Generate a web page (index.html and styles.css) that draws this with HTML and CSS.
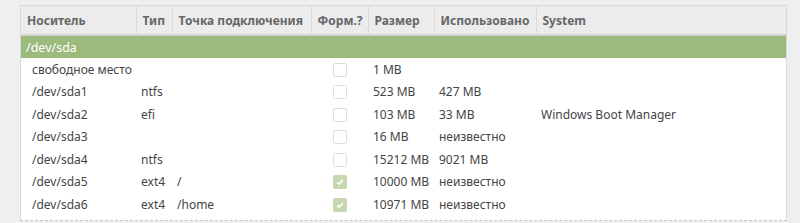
FILE: index.html
```html
<!DOCTYPE html>
<html lang="ru">
<head>
    <meta charset="UTF-8">
    <title>Разделы</title>
    <link rel="stylesheet" href="styles.css">
</head>
<body>
    <div class="frame">
        <table class="parts">
            <colgroup>
                <col style="width:115px">
                <col style="width:36px">
                <col style="width:139px">
                <col style="width:57px">
                <col style="width:66px">
                <col style="width:102px">
                <col>
            </colgroup>
            <thead>
                <tr>
                    <th>Носитель</th>
                    <th>Тип</th>
                    <th>Точка подключения</th>
                    <th>Форм.?</th>
                    <th>Размер</th>
                    <th>Использовано</th>
                    <th>System</th>
                </tr>
            </thead>
            <tbody>
                <tr class="disk">
                    <td colspan="7">/dev/sda</td>
                </tr>
                <tr>
                    <td class="dev">свободное место</td>
                    <td></td>
                    <td></td>
                    <td class="chk"><span class="box"></span></td>
                    <td>1 MB</td>
                    <td></td>
                    <td></td>
                </tr>
                <tr>
                    <td class="dev">/dev/sda1</td>
                    <td>ntfs</td>
                    <td></td>
                    <td class="chk"><span class="box"></span></td>
                    <td>523 MB</td>
                    <td>427 MB</td>
                    <td></td>
                </tr>
                <tr>
                    <td class="dev">/dev/sda2</td>
                    <td>efi</td>
                    <td></td>
                    <td class="chk"><span class="box"></span></td>
                    <td>103 MB</td>
                    <td>33 MB</td>
                    <td>Windows Boot Manager</td>
                </tr>
                <tr>
                    <td class="dev">/dev/sda3</td>
                    <td></td>
                    <td></td>
                    <td class="chk"><span class="box"></span></td>
                    <td>16 MB</td>
                    <td>неизвестно</td>
                    <td></td>
                </tr>
                <tr>
                    <td class="dev">/dev/sda4</td>
                    <td>ntfs</td>
                    <td></td>
                    <td class="chk"><span class="box"></span></td>
                    <td>15212 MB</td>
                    <td>9021 MB</td>
                    <td></td>
                </tr>
                <tr>
                    <td class="dev">/dev/sda5</td>
                    <td>ext4</td>
                    <td>/</td>
                    <td class="chk"><span class="box checked"><svg viewBox="0 0 13 13"><path d="M3.5 6.8 L5.6 8.8 L9.6 4.4" /></svg></span></td>
                    <td>10000 MB</td>
                    <td>неизвестно</td>
                    <td></td>
                </tr>
                <tr>
                    <td class="dev">/dev/sda6</td>
                    <td>ext4</td>
                    <td>/home</td>
                    <td class="chk"><span class="box checked"><svg viewBox="0 0 13 13"><path d="M3.5 6.8 L5.6 8.8 L9.6 4.4" /></svg></span></td>
                    <td>10971 MB</td>
                    <td>неизвестно</td>
                    <td></td>
                </tr>
            </tbody>
        </table>
    </div>
</body>
</html>
```
FILE: styles.css
```css
body {
    margin: 0;
    background-color: #efefef;
    font-family: "Noto Sans", "Open Sans", sans-serif;
    font-size: 12px;
    color: #444;
}
.frame {
    margin: 5px 0 0 20px;
    width: 765px;
    height: 214px;
    border: 1px solid #d8d8d8;
    border-bottom: 1px dashed #c4c4c4;
    background-color: white;
    overflow: hidden;
}
.parts {
    width: 100%;
    border-collapse: collapse;
    table-layout: fixed;
}
.parts th {
    height: 28px;
    padding: 0 6px;
    text-align: left;
    font-weight: bold;
    color: #676767;
    background-color: #ececec;
    border-right: 1px solid #dadada;
    border-bottom: 2px solid #d2d2d2;
    white-space: nowrap;
}
.parts th:last-child {
    border-right: none;
}
.parts td {
    height: 22.5px;
    padding: 0 5px;
    white-space: nowrap;
}
.parts tr.disk td {
    height: 22px;
    background-color: #9bba7b;
    color: white;
    font-size: 12.5px;
}
.parts td.dev {
    padding-left: 11px;
}
.parts td.chk {
    text-align: center;
    padding: 0;
}
.box {
    display: inline-block;
    width: 12px;
    height: 12px;
    border: 1px solid #dedede;
    border-radius: 2px;
    vertical-align: middle;
    position: relative;
    top: -1px;
}
.box.checked {
    border-color: #c6d7b2;
    background-color: #c6d7b2;
}
.box svg {
    display: block;
    width: 12px;
    height: 12px;
}
.box path {
    fill: none;
    stroke: white;
    stroke-width: 1.8;
}
```
